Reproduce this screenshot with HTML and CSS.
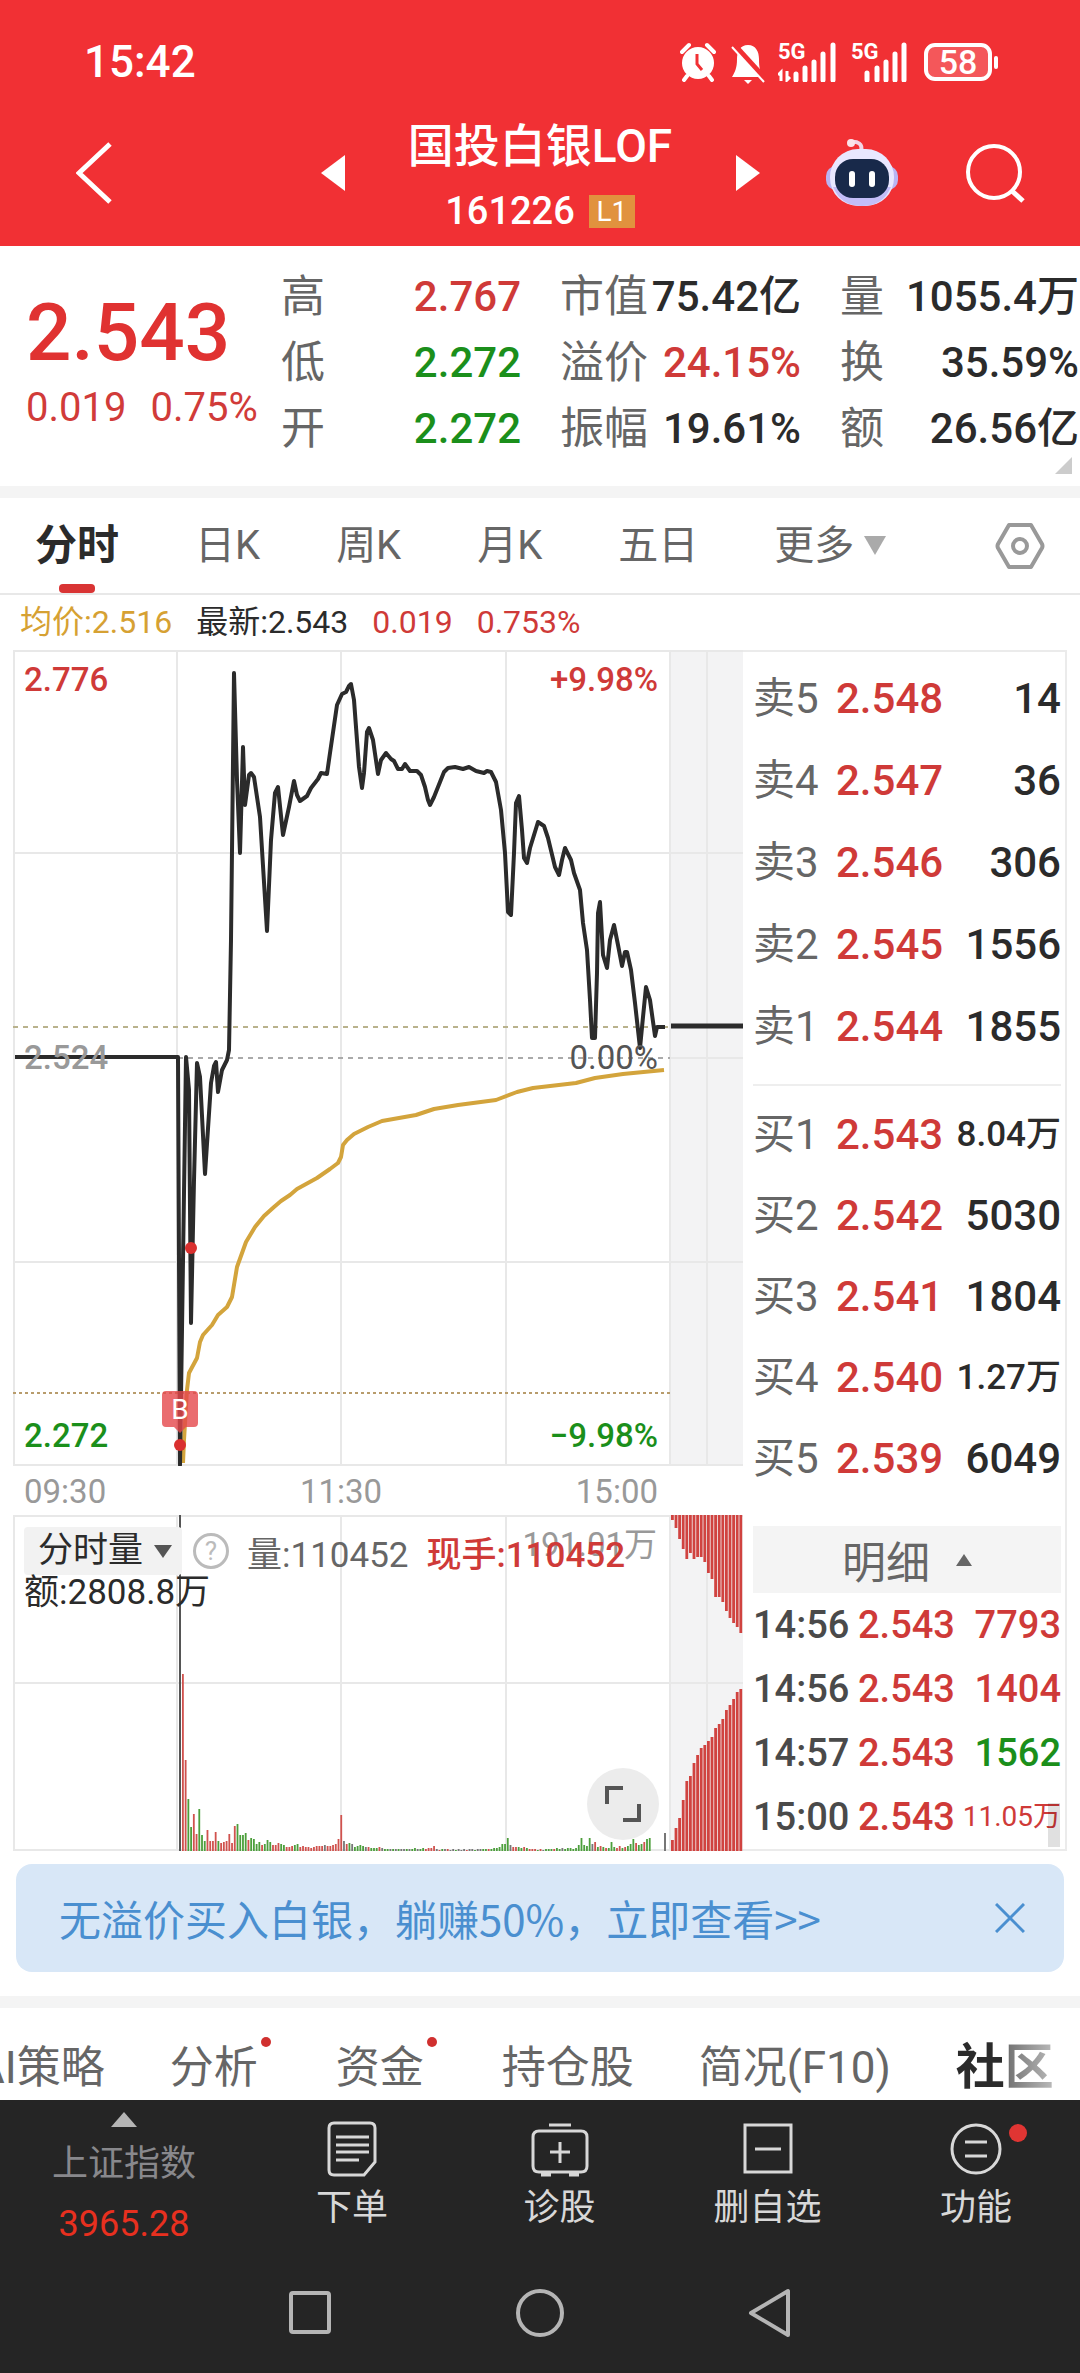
FILE: index.html
```
<!DOCTYPE html>
<html lang="zh-CN">
<head>
    <meta charset="UTF-8">
    <meta name="viewport" content="width=device-width, initial-scale=1.0">
    <title>国投白银LOF 161226</title>
    <link rel="stylesheet" href="styles.css">
</head>
<body>
    <header class="header">
        <div class="status-bar">
            <span class="clock">15:42</span>
            <div class="status-icons">
                <svg width="36" height="40" viewBox="0 0 36 40">
                    <circle cx="18" cy="21" r="16" fill="#fff"/>
                    <path d="M2 10 L9 3 M34 10 L27 3 M7 34 L4 38 M29 34 L32 38" stroke="#fff" stroke-width="4" stroke-linecap="round"/>
                    <path d="M17 12 V22 L22 28" stroke="#f13034" stroke-width="3" fill="none"/>
                </svg>
                <svg class="bell" width="36" height="42" viewBox="0 0 36 42">
                    <path d="M18 2 C10 2 7 9 7 16 C7 25 5 29 2 34 H34 C30 29 29 25 29 16 C29 9 26 2 18 2 Z M14 37 H22 L18 41 Z" fill="#fff"/>
                    <path d="M3 1 L36 37" stroke="#f13034" stroke-width="6"/>
                    <path d="M2 4 L34 39" stroke="#fff" stroke-width="2"/>
                </svg>
                <div class="signal">
                    <span class="net">5G</span>
                    <svg width="60" height="40" viewBox="0 0 60 40">
                        <path d="M3 39 V30 L0 33 M9 29 V38 L12 35" stroke="#fff" stroke-width="3" fill="none"/>
                        <path d="M18 38 V32 M27 38 V26 M36 38 V20 M45 38 V12 M55 38 V3" stroke="#fff" stroke-width="5" stroke-linecap="round"/>
                    </svg>
                </div>
                <div class="signal">
                    <span class="net">5G</span>
                    <svg width="58" height="40" viewBox="0 0 58 40">
                        <path d="M16 38 V31 M26 38 V26 M35 38 V20 M44 38 V12 M53 38 V3" stroke="#fff" stroke-width="5" stroke-linecap="round"/>
                    </svg>
                </div>
                <div class="battery">58</div>
            </div>
        </div>
        <div class="title-bar">
            <div class="title-left">
                <button class="icon-btn" aria-label="返回">
                    <svg width="38" height="64" viewBox="0 0 38 64"><path d="M34 3 L3 32 L34 61" fill="none" stroke="#fff" stroke-width="5"/></svg>
                </button>
                <button class="icon-btn" aria-label="上一只">
                    <svg width="24" height="36" viewBox="0 0 24 36"><path d="M24 0 V36 L0 18 Z" fill="#fff"/></svg>
                </button>
            </div>
            <div class="title">
                <h1>国投白银LOF</h1>
                <div class="code">161226 <span class="level">L1</span></div>
            </div>
            <div class="title-right">
                <button class="icon-btn" aria-label="下一只">
                    <svg width="24" height="36" viewBox="0 0 24 36"><path d="M0 0 V36 L24 18 Z" fill="#fff"/></svg>
                </button>
                <button class="icon-btn" aria-label="智能助手">
                    <svg width="74" height="68" viewBox="0 0 74 68">
                        <path d="M36 12 C38 5 33 2 25 3" fill="none" stroke="#f3d5e6" stroke-width="4" stroke-linecap="round"/>
                        <circle cx="26" cy="4" r="4" fill="#fbe3ea"/>
                        <rect x="1" y="27" width="72" height="24" rx="10" fill="#b9b4f3"/>
                        <rect x="5" y="10" width="64" height="57" rx="28" fill="#e9e7ff"/>
                        <path d="M8 48 C14 62 24 67 37 67 C50 67 60 62 66 48 Z" fill="#c3bdf8"/>
                        <rect x="10" y="20" width="54" height="39" rx="18" fill="#18294a"/>
                        <rect x="24" y="32" width="6" height="16" rx="3" fill="#fff"/>
                        <rect x="44" y="32" width="6" height="16" rx="3" fill="#fff"/>
                    </svg>
                </button>
                <button class="icon-btn" aria-label="搜索">
                    <svg width="62" height="60" viewBox="0 0 62 60"><circle cx="30" cy="29" r="26" fill="none" stroke="#fff" stroke-width="4"/><path d="M48 48 L59 58" stroke="#fff" stroke-width="5"/></svg>
                </button>
            </div>
        </div>
    </header>

    <section class="quote">
        <div class="quote-main">
            <div class="price">2.543</div>
            <div class="change"><span>0.019</span><span>0.75%</span></div>
        </div>
        <dl class="kv">
            <dt>高</dt><dd class="up">2.767</dd>
            <dt>低</dt><dd class="down">2.272</dd>
            <dt>开</dt><dd class="down">2.272</dd>
        </dl>
        <dl class="kv">
            <dt>市值</dt><dd>75.42亿</dd>
            <dt>溢价</dt><dd class="up">24.15%</dd>
            <dt>振幅</dt><dd>19.61%</dd>
        </dl>
        <dl class="kv">
            <dt>量</dt><dd>1055.4万</dd>
            <dt>换</dt><dd>35.59%</dd>
            <dt>额</dt><dd>26.56亿</dd>
        </dl>
        <span class="corner"></span>
    </section>

    <nav class="period-tabs">
        <a href="#" class="active">分时</a>
        <a href="#">日K</a>
        <a href="#">周K</a>
        <a href="#">月K</a>
        <a href="#">五日</a>
        <a href="#" class="more">更多<i class="caret"></i></a>
        <button class="icon-btn settings" aria-label="设置">
            <svg width="50" height="46" viewBox="0 0 50 46" fill="none" stroke="#999" stroke-width="4">
                <path d="M14 2 H36 L47 21 Q48 23 47 25 L36 44 H14 L3 25 Q2 23 3 21 Z" stroke-linejoin="round"/>
                <circle cx="25" cy="23" r="7"/>
            </svg>
        </button>
    </nav>

    <div class="chart-info">
        <span class="avg">均价:2.516</span>
        <span>最新:2.543</span>
        <span class="up">0.019</span>
        <span class="up">0.753%</span>
    </div>

    <main class="market">
        <div class="charts">
            <div class="price-chart">
                <svg class="plot" viewBox="13 650 730 816">
                    <rect x="670" y="650" width="73" height="816" fill="#f3f3f4"/>
                    <path class="grid" d="M13 651 H743 M13 853 H743 M671 1058 H743 M13 1262 H743 M13 1465 H743 M14 650 V1466 M177 650 V1466 M341 650 V1466 M506 650 V1466 M670 650 V1466 M707 650 V1466"/>
                    <path d="M13 1027 H670" stroke="#b9b28c" stroke-width="2" stroke-dasharray="5 5"/>
                    <path d="M178 1058 H670" stroke="#aaa" stroke-width="2" stroke-dasharray="5 5"/>
                    <path d="M13 1393 H670" stroke="#b89c6c" stroke-width="2" stroke-dasharray="3 3"/>
                    <polyline class="avg-line" points="183,1463 184,1440 187,1390 189,1373 197,1358 200,1342 203,1335 212,1325 218,1315 227,1307 232,1297 237,1267 246,1242 255,1227 264,1216 274,1207 281,1201 290,1195 297,1189 317,1178 330,1169 338,1163 341,1157 343,1145 347,1140 354,1134 368,1127 382,1121 416,1115 434,1109 458,1105 496,1100 517,1092 533,1088 576,1083 595,1078 623,1074 664,1070"/>
                    <polyline class="price-line" points="15,1057 178,1057 180,1465 186,1057 189,1090 191,1323 194,1180 197,1063 200,1077 205,1174 211,1083 214,1066 216,1062 218,1092 222,1070 227,1060 229,1050 231,940 234,673 237,780 240,853 243,747 245,805 249,775 251,773 254,777 260,817 267,931 271,840 275,793 278,787 283,835 289,807 294,781 297,795 300,801 307,796 311,788 318,779 321,773 327,774 330,753 337,705 342,694 346,692 349,686 351,684 354,700 356,727 359,767 362,788 364,773 367,732 369,728 373,740 378,774 381,760 386,753 391,759 394,761 398,769 402,769 405,764 410,771 417,771 421,775 425,787 428,800 430,805 434,797 444,772 448,768 455,767 463,769 469,767 476,771 484,773 487,771 491,772 496,782 501,810 505,853 508,912 511,915 514,853 516,803 519,796 522,830 524,858 527,863 530,848 538,822 544,826 548,838 555,867 559,875 562,860 565,848 571,860 574,873 580,890 583,923 587,950 590,1000 592,1038 595,1038 597,973 598,913 600,902 603,955 607,968 610,940 614,925 618,945 622,966 625,952 627,952 631,970 635,1003 640,1048 643,1017 646,987 650,1000 655,1036 657,1027 665,1027"/>
                    <path d="M671 1026 H743" stroke="#2b2b2b" stroke-width="5"/>
                    <!-- 买入标记 -->
                    <path d="M166 1391 H194 Q198 1391 198 1395 V1423 Q198 1427 194 1427 H186 L180 1433 L174 1427 H166 Q162 1427 162 1423 V1395 Q162 1391 166 1391 Z" fill="#e5474b" fill-opacity="0.8"/>
                    <text x="180" y="1419" class="buy-mark">B</text>
                    <circle cx="180" cy="1445" r="6" fill="#d9302f"/>
                    <circle cx="191" cy="1248" r="6" fill="#d9302f"/>
                </svg>
                <div class="scale">
                    <div><span class="up">2.776</span><span class="up">+9.98%</span></div>
                    <div><span class="muted">2.524</span><span class="zero">0.00%</span></div>
                    <div><span class="down">2.272</span><span class="down">−9.98%</span></div>
                </div>
            </div>
            <div class="time-axis">
                <span>09:30</span><span>11:30</span><span>15:00</span>
            </div>
            <div class="volume-chart">
                <svg class="plot" id="volume" viewBox="13 1515 730 336">
                    <rect x="670" y="1515" width="73" height="336" fill="#f3f3f4"/>
                    <path class="grid" d="M13 1516 H743 M13 1683 H743 M13 1850 H743 M14 1515 V1851 M177 1515 V1851 M341 1515 V1851 M506 1515 V1851 M670 1515 V1851 M707 1515 V1851"/>
                </svg>
                <div class="volume-max">191.01万</div>
                <div class="volume-info">
                    <div class="select-wrap">
                        <select aria-label="指标"><option>分时量</option></select>
                        <i class="caret dark"></i>
                    </div>
                    <button class="help" aria-label="说明">?</button>
                    <span class="vol">量:110452</span>
                    <span class="up hand">现手:110452</span>
                </div>
                <div class="turnover">额:2808.8万</div>
                <button class="expand" aria-label="全屏">
                    <svg width="36" height="36" viewBox="0 0 36 36" fill="none" stroke="#555" stroke-width="4"><path d="M2 18 V2 H18 M34 18 V34 H18"/></svg>
                </button>
            </div>
        </div>

        <aside class="book">
            <table class="orders sell">
                <tr><th>卖5</th><td class="up">2.548</td><td>14</td></tr>
                <tr><th>卖4</th><td class="up">2.547</td><td>36</td></tr>
                <tr><th>卖3</th><td class="up">2.546</td><td>306</td></tr>
                <tr><th>卖2</th><td class="up">2.545</td><td>1556</td></tr>
                <tr><th>卖1</th><td class="up">2.544</td><td>1855</td></tr>
            </table>
            <table class="orders buy">
                <tr><th>买1</th><td class="up">2.543</td><td class="long">8.04万</td></tr>
                <tr><th>买2</th><td class="up">2.542</td><td>5030</td></tr>
                <tr><th>买3</th><td class="up">2.541</td><td>1804</td></tr>
                <tr><th>买4</th><td class="up">2.540</td><td class="long">1.27万</td></tr>
                <tr><th>买5</th><td class="up">2.539</td><td>6049</td></tr>
            </table>
            <button class="detail-head">明细<i class="caret-up"></i></button>
            <table class="ticks">
                <tr><td>14:56</td><td class="up">2.543</td><td class="up">7793</td></tr>
                <tr><td>14:56</td><td class="up">2.543</td><td class="up">1404</td></tr>
                <tr><td>14:57</td><td class="up">2.543</td><td class="down">1562</td></tr>
                <tr><td>15:00</td><td class="up">2.543</td><td class="up long">11.05万</td></tr>
            </table>
            <span class="scroll-thumb"></span>
        </aside>
    </main>

    <div class="banner">
        <a href="#">无溢价买入白银，躺赚50%，立即查看&gt;&gt;</a>
        <button class="icon-btn" aria-label="关闭">
            <svg width="30" height="30" viewBox="0 0 30 30" stroke="#4a8fd0" stroke-width="3"><path d="M1 1 L29 29 M29 1 L1 29"/></svg>
        </button>
    </div>

    <nav class="content-tabs">
        <a href="#">AI策略</a>
        <a href="#" class="dot">分析</a>
        <a href="#" class="dot">资金</a>
        <a href="#">持仓股</a>
        <a href="#">简况(F10)</a>
        <a href="#" class="active">社区</a>
    </nav>

    <footer class="footer">
        <div class="toolbar">
            <button class="index">
                <i class="caret-up"></i>
                <span class="index-name">上证指数</span>
                <span class="index-value">3965.28</span>
            </button>
            <button class="tool">
                <svg width="50" height="58" viewBox="0 0 50 58"><path d="M7 3 H43 Q48 3 48 8 V42 L37 55 H7 Q2 55 2 50 V8 Q2 3 7 3 Z M9 17 H42 M9 25 H42 M9 32 H42 M9 40 H32"/></svg>
                <span>下单</span>
            </button>
            <button class="tool">
                <svg width="58" height="58" viewBox="0 0 58 58"><path d="M18 5 H40 M8 11 H50 Q56 11 56 17 V46 Q56 52 50 52 H8 Q2 52 2 46 V17 Q2 11 8 11 Z M29 22 V43 M19 32 H39 M10 55 H20 M38 55 H48"/></svg>
                <span>诊股</span>
            </button>
            <button class="tool">
                <svg width="50" height="58" viewBox="0 0 50 58"><path d="M2 5 H48 V52 H2 Z M12 29 H38"/></svg>
                <span>删自选</span>
            </button>
            <button class="tool has-dot">
                <svg width="52" height="58" viewBox="0 0 52 58"><circle cx="26" cy="29" r="24"/><path d="M15 22 H37 M15 36 H37"/></svg>
                <span>功能</span>
            </button>
        </div>
        <div class="system-nav">
            <button class="icon-btn" aria-label="最近任务"><svg width="50" height="50" viewBox="0 0 50 50"><rect x="6" y="5" width="38" height="39" rx="2"/></svg></button>
            <button class="icon-btn" aria-label="主页"><svg width="50" height="50" viewBox="0 0 50 50"><circle cx="25" cy="25" r="22"/></svg></button>
            <button class="icon-btn" aria-label="后退"><svg width="50" height="50" viewBox="0 0 50 50"><path d="M43 3 V47 L6 25 Z" stroke-linejoin="round"/></svg></button>
        </div>
    </footer>

    <script src="script.js"></script>
</body>
</html>
```

FILE: styles.css
```
* {
    box-sizing: border-box;
}
body {
    margin: 0;
    background-color: #fff;
    color: #2b2b2b;
    font-family: Roboto, "Noto Sans CJK SC", sans-serif;
    font-weight: 400;
}
a {
    color: inherit;
    text-decoration: none;
}
button,
select {
    padding: 0;
    border: none;
    background: none;
    color: inherit;
    font: inherit;
}
svg {
    display: block;
}
.icon-btn {
    display: block;
}
.up {
    color: #cf3a38;
}
.down {
    color: #1b8f1b;
}
.muted {
    color: #999;
}
.caret {
    display: inline-block;
    border: 11px solid transparent;
    border-top: 19px solid #aaa;
    border-bottom: none;
}
.caret.dark {
    border-width: 13px 9px 0;
    border-top-color: #555;
}
.caret-up {
    display: inline-block;
    border: 8px solid transparent;
    border-bottom: 12px solid #666;
    border-top: none;
}

/* 顶部 */
.header {
    background-color: #f13034;
    color: #fff;
}
.status-bar {
    display: flex;
    justify-content: space-between;
    align-items: center;
    height: 124px;
    padding: 0 88px 0 84px;
}
.clock {
    font-size: 44px;
    font-weight: 500;
}
.status-icons {
    display: flex;
    align-items: center;
}
.bell {
    margin: 4px 12px 0 14px;
}
.signal {
    position: relative;
    margin-right: 13px;
}
.net {
    position: absolute;
    top: 0;
    left: 0;
    font-size: 22px;
    line-height: 20px;
    font-weight: 700;
}
.battery {
    position: relative;
    width: 68px;
    height: 38px;
    margin-left: 2px;
    border: 4px solid #fff;
    border-radius: 11px;
    background-color: #f4575a;
    font-size: 34px;
    font-weight: 500;
    line-height: 31px;
    text-align: center;
}
.battery::after {
    content: "";
    position: absolute;
    top: 9px;
    right: -10px;
    width: 4px;
    height: 13px;
    border-radius: 2px;
    background-color: #fff;
}
.title-bar {
    display: grid;
    grid-template-columns: 1fr 391px 1fr;
    height: 122px;
}
.title-left,
.title-right {
    display: flex;
    justify-content: space-between;
    align-items: center;
    padding-bottom: 24px;
}
.title-left {
    padding-left: 76px;
}
.title-right {
    padding-right: 54px;
}
.title {
    text-align: center;
}
.title h1 {
    margin: 0;
    font-size: 46px;
    font-weight: 500;
    line-height: 44px;
}
.code {
    display: flex;
    justify-content: center;
    align-items: center;
    gap: 14px;
    margin-top: 18px;
    font-size: 38px;
    font-weight: 500;
    line-height: 50px;
}
.level {
    width: 46px;
    background-color: #e1923e;
    font-size: 28px;
    font-weight: 400;
    line-height: 33px;
}

/* 行情 */
.quote {
    position: relative;
    display: grid;
    grid-template-columns: 255fr 279fr 280fr 240fr;
    padding: 18px 0 24px 26px;
    border-bottom: 12px solid #f4f4f4;
}
.quote-main {
    padding-top: 19px;
    color: #e03231;
}
.price {
    font-size: 80px;
    font-weight: 500;
    line-height: 100px;
}
.change {
    display: flex;
    gap: 24px;
    color: #d13b39;
    font-size: 40px;
    line-height: 50px;
}
.kv {
    display: grid;
    grid-template-columns: auto 1fr;
    margin: 0;
    padding-right: 39px;
    font-size: 42px;
    line-height: 66px;
    white-space: nowrap;
}
.kv:nth-of-type(3) {
    padding-right: 1px;
}
.kv dt {
    color: #666;
    font-size: 44px;
}
.kv dd {
    margin: 0;
    font-weight: 500;
    text-align: right;
}
.corner {
    position: absolute;
    right: 8px;
    bottom: 12px;
    border-left: 17px solid transparent;
    border-bottom: 17px solid #ccc;
}

/* 周期 */
.period-tabs {
    display: flex;
    align-items: center;
    gap: 76px;
    height: 97px;
    padding: 0 35px;
    border-bottom: 2px solid #e8e8e8;
    color: #666;
    font-size: 40px;
    line-height: 95px;
}
.period-tabs .active {
    position: relative;
    color: #2b2b2b;
    font-size: 42px;
    font-weight: 700;
}
.period-tabs .active::after {
    content: "";
    position: absolute;
    left: 50%;
    bottom: 0;
    width: 36px;
    height: 9px;
    margin-left: -18px;
    border-radius: 4px;
    background-color: #d93434;
}
.more {
    display: flex;
    align-items: center;
    gap: 10px;
}
.settings {
    margin-left: auto;
}
.chart-info {
    display: flex;
    gap: 24px;
    padding: 0 20px;
    font-size: 32px;
    line-height: 55px;
}
.avg {
    color: #d6a133;
}

/* 图表 */
.market {
    display: grid;
    grid-template-columns: 730fr 324fr;
    margin: 0 13px;
}
.price-chart,
.volume-chart {
    position: relative;
}
.plot {
    width: 100%;
    height: auto;
}
.grid {
    fill: none;
    stroke: #e8e8e8;
    stroke-width: 2;
}
.price-line {
    fill: none;
    stroke: #2b2b2b;
    stroke-width: 4;
    stroke-linejoin: round;
}
.avg-line {
    fill: none;
    stroke: #d3a43c;
    stroke-width: 4;
    stroke-linejoin: round;
}
.buy-mark {
    fill: #fff;
    font-size: 28px;
    text-anchor: middle;
}
.scale {
    position: absolute;
    inset: 0 10% 0 0;
    display: flex;
    flex-direction: column;
    justify-content: space-between;
    padding: 8px 12px 8px 11px;
    font-size: 33px;
    font-weight: 500;
    line-height: 44px;
}
.scale div {
    display: flex;
    justify-content: space-between;
}
.zero {
    color: #555;
    font-weight: 400;
}
.time-axis {
    display: flex;
    justify-content: space-between;
    width: 90%;
    padding: 0 12px 0 11px;
    color: #999;
    font-size: 33px;
    line-height: 51px;
    height: 49px;
}
.volume-info {
    position: absolute;
    top: 12px;
    left: 11px;
    display: flex;
    align-items: center;
    height: 48px;
    font-size: 35px;
    white-space: nowrap;
}
.select-wrap {
    display: flex;
    align-items: center;
    height: 48px;
    padding: 0 10px 0 14px;
    gap: 10px;
    border-radius: 4px;
    background-color: #f2f2f2;
}
.select-wrap select {
    appearance: none;
    width: 106px;
    font-size: 35px;
    line-height: 48px;
}
.help {
    width: 36px;
    height: 36px;
    margin-left: 11px;
    border: 3px solid #bbb;
    border-radius: 50%;
    color: #bbb;
    font-size: 26px;
    line-height: 30px;
}
.vol {
    margin-left: 18px;
    color: #666;
}
.hand {
    margin-left: 18px;
    font-weight: 500;
}
.turnover {
    position: absolute;
    top: 56px;
    left: 11px;
    font-size: 35px;
    line-height: 44px;
}
.volume-max {
    position: absolute;
    top: 8px;
    right: 86px;
    color: #999;
    font-size: 33px;
    line-height: 44px;
}
.expand {
    position: absolute;
    right: 84px;
    bottom: 11px;
    display: flex;
    justify-content: center;
    align-items: center;
    width: 72px;
    height: 72px;
    border-radius: 50%;
    background-color: #ececec;
}

/* 盘口 */
.book {
    position: relative;
    border: 2px solid #ebebeb;
    border-left: none;
    padding: 6px 4px 0 10px;
}
.orders,
.ticks {
    width: 100%;
    border-collapse: collapse;
    table-layout: fixed;
    white-space: nowrap;
}
.orders th,
.orders td,
.ticks td {
    padding: 0;
    text-align: left;
}
.orders {
    font-size: 42px;
    font-weight: 500;
    line-height: 81px;
}
.orders th {
    width: 83px;
    color: #666;
    font-weight: 400;
}
.orders td:nth-child(2) {
    width: 106px;
}
.orders td:last-child,
.ticks td:last-child {
    text-align: right;
}
.orders .long {
    font-size: 35px;
}
.sell {
    margin-bottom: 16px;
    line-height: 82px;
}
.buy {
    border-top: 2px solid #eee;
    border-collapse: separate;
    border-spacing: 0;
    padding-top: 8px;
}
.detail-head {
    display: flex;
    justify-content: center;
    align-items: center;
    gap: 26px;
    width: 100%;
    height: 67px;
    margin-top: 27px;
    background-color: #f4f4f4;
    color: #666;
    font-size: 44px;
}
.ticks {
    font-size: 38px;
    font-weight: 500;
    line-height: 64px;
}
.ticks td:first-child {
    width: 105px;
    color: #4a4a4a;
}
.ticks td:nth-child(2) {
    width: 96px;
}
.ticks .long {
    font-size: 28px;
    font-weight: 400;
}
.scroll-thumb {
    position: absolute;
    right: 5px;
    bottom: 2px;
    width: 12px;
    height: 44px;
    background-color: rgba(0,0,0,0.12);
}

/* 广告条 */
.banner {
    display: flex;
    justify-content: space-between;
    align-items: center;
    height: 108px;
    margin: 13px 16px 24px;
    padding: 0 39px 0 43px;
    border-radius: 16px;
    background-color: #d8e7f7;
    color: #4a8fd0;
    font-family: "Noto Sans CJK SC", sans-serif;
    font-size: 42px;
    line-height: 60px;
}
.content-tabs {
    display: flex;
    align-items: center;
    gap: 65px;
    height: 104px;
    overflow: hidden;
    border-top: 12px solid #f4f4f4;
    padding-top: 28px;
    color: #666;
    font-size: 44px;
    line-height: 66px;
    white-space: nowrap;
}
.content-tabs a:first-child {
    margin-left: -24px;
}
.content-tabs .dot {
    position: relative;
    padding-right: 13px;
}
.dot::after {
    content: "";
    position: absolute;
    top: 2px;
    right: 0;
    width: 10px;
    height: 10px;
    border-radius: 50%;
    background-color: #d0302f;
}
.content-tabs .active {
    background: linear-gradient(90deg, #2b2b2b 50%, #777 55%, #bbb);
    background-clip: text;
    color: transparent;
    font-size: 49px;
    font-weight: 700;
}

/* 底部 */
.footer {
    background-color: #252525;
    color: #d8d8d8;
}
.toolbar {
    display: grid;
    grid-template-columns: 248fr 208fr 207fr 209fr 208fr;
    height: 154px;
}
.toolbar button {
    display: flex;
    flex-direction: column;
    align-items: center;
    font-size: 36px;
}
.index {
    padding-top: 12px;
}
.index .caret-up {
    border-width: 0 13px 15px;
    border-bottom-color: #b5b5b5;
}
.index-name {
    margin-top: 12px;
    color: #88888c;
    line-height: 50px;
}
.index-value {
    margin-top: 10px;
    color: #e8301f;
    line-height: 50px;
}
.tool {
    position: relative;
    padding-top: 20px;
}
.tool svg {
    fill: none;
    stroke: #d8d8d8;
    stroke-width: 3;
}
.tool span {
    margin-top: 6px;
    line-height: 48px;
}
.has-dot::after {
    content: "";
    position: absolute;
    top: 24px;
    left: 50%;
    width: 18px;
    height: 18px;
    margin-left: 33px;
    border-radius: 50%;
    background-color: #e03533;
}
.system-nav {
    display: flex;
    justify-content: center;
    gap: 180px;
    padding: 34px 0 35px;
}
.system-nav svg {
    fill: none;
    stroke: #b5b5b5;
    stroke-width: 4;
}
```

FILE: script.js
```
// 成交量柱: 高度 + 颜色 (r 涨, g 跌, k 平)
const volumes = "177r 91r 52g 24g 37r 17r 42g 16g 10g 21r 10r 10r 19r 10g 8r 9r 10r 17r 8r 25r 27g 16g 16g 18g 11r 13g 12g 7g 9g 6r 7g 11g 9g 6r 6r 8r 7g 6g 4r 4r 5r 6g 7g 4r 5r 4r 4r 3r 4r 5r 5r 5r 6k 5r 5r 6r 7r 12r 36r 10k 7r 8g 7k 4g 5g 6g 5g 4k 4r 3g 3g 3g 4r 3k 2g 2g 2k 2g 2k 2g 2k 2k 2g 2k 2g 3g 2k 2g 3g 2r 3r 3r 5r 2k 1r 2g 2k 2r 1k 2k 1g 2k 1k 2k 1r 2k 2k 1g 2k 2k 2g 2g 2r 2g 3g 3g 4g 7g 7g 13g 6k 4r 4r 4g 3g 4r 3g 2r 2r 2r 1g 2r 1k 2g 2g 2g 2r 3g 2g 3k 2g 3g 3g 2g 3g 6g 13g 6g 5g 13g 7k 9r 4g 5r 4g 3r 3g 9g 4g 3r 5r 3g 4r 5g 7g 12g 8r 6g 7g 9r 12g 13g";
// 盘口累计挂单
const asks = [5, 13, 24, 34, 44, 38, 44, 42, 42, 47, 58, 64, 82, 82, 87, 96, 103, 108, 112, 118];
const bids = [11, 23, 33, 51, 70, 75, 88, 96, 103, 106, 110, 114, 123, 127, 132, 141, 146, 152, 159, 162];
const colors = { r: "#d0524e", g: "#4c9f3c", k: "#777" };

const chartTop = 1515;
const chartBottom = 1851;
const chart = document.getElementById("volume");

function addBar(x, y, width, height, color) {
    const bar = document.createElementNS("http://www.w3.org/2000/svg", "rect");
    bar.setAttribute("x", x);
    bar.setAttribute("y", y);
    bar.setAttribute("width", width);
    bar.setAttribute("height", height);
    bar.setAttribute("fill", color);
    chart.appendChild(bar);
}

addBar(179, chartTop, 2, chartBottom - chartTop, "#555");
volumes.split(" ").forEach((item, i) => {
    const height = parseInt(item);
    addBar(182 + i * 2.73, chartBottom - height, 1.8, height, colors[item.slice(-1)]);
});
addBar(664, chartBottom - 18, 2, 18, "#777");

asks.forEach((height, i) => addBar(671 + i * 3.6, chartTop, 2.8, height, "#d04340"));
bids.forEach((height, i) => addBar(671 + i * 3.6, chartBottom - height, 2.8, height, "#d04340"));
```
